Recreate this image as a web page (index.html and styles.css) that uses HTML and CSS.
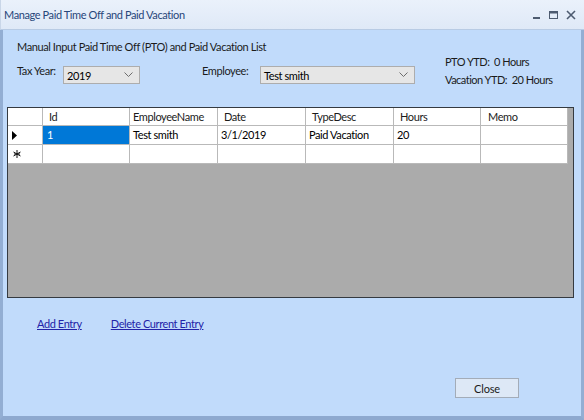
FILE: index.html
```html
<!DOCTYPE html>
<html>
<head>
<meta charset="utf-8">
<link rel="stylesheet" href="styles.css">
</head>
<body>
<div class="window">
  <div class="titlebar">
    <span class="title">Manage Paid Time Off and Paid Vacation</span>
    <div class="caption-btns">
      <svg width="10" height="10" viewBox="0 0 10 10"><rect x="1" y="7" width="7" height="2" fill="#4d5b70"/></svg>
      <svg width="10" height="10" viewBox="0 0 10 10"><rect x="0.5" y="1.5" width="8" height="7" fill="none" stroke="#4d5b70"/><rect x="0.5" y="1.5" width="8" height="2" fill="#4d5b70"/></svg>
      <svg width="10" height="10" viewBox="0 0 10 10"><path d="M1 1 L9 9 M9 1 L1 9" stroke="#4d5b70" stroke-width="1.6"/></svg>
    </div>
  </div>
  <div class="client">
    <div class="top">
      <div class="left">
        <div class="heading">Manual Input Paid Time Off (PTO) and Paid Vacation List</div>
        <div class="form">
          <span class="label label-tax">Tax Year:</span>
          <div class="combo combo-year"><span>2019</span><svg width="9" height="6" viewBox="0 0 9 6"><path d="M0.5 0.5 L4.5 4.5 L8.5 0.5" fill="none" stroke="#6d6d6d"/></svg></div>
          <span class="label label-emp">Employee:</span>
          <div class="combo combo-emp"><span>Test smith</span><svg width="9" height="6" viewBox="0 0 9 6"><path d="M0.5 0.5 L4.5 4.5 L8.5 0.5" fill="none" stroke="#6d6d6d"/></svg></div>
        </div>
      </div>
      <div class="stats">
        <div>PTO YTD:&nbsp; 0 Hours</div>
        <div>Vacation YTD:&nbsp; 20 Hours</div>
      </div>
    </div>
    <div class="grid">
      <div class="table">
        <div class="cell rh"></div>
        <div class="cell hd">Id</div>
        <div class="cell hd hd-name">EmployeeName</div>
        <div class="cell hd">Date</div>
        <div class="cell hd">TypeDesc</div>
        <div class="cell hd hd-hours">Hours</div>
        <div class="cell hd hd-memo">Memo</div>

        <div class="cell rh"><svg width="6" height="9" viewBox="0 0 6 9"><path d="M0 0 L5 4.5 L0 9 Z" fill="#000"/></svg></div>
        <div class="cell sel">1</div>
        <div class="cell">Test smith</div>
        <div class="cell">3/1/2019</div>
        <div class="cell">Paid Vacation</div>
        <div class="cell">20</div>
        <div class="cell"></div>

        <div class="cell rh"><svg class="star" width="8" height="8" viewBox="0 0 8 8"><path d="M4 0 V8 M0.5 2 L7.5 6 M7.5 2 L0.5 6 M1 4 H7" stroke="#111" stroke-width="1"/></svg></div>
        <div class="cell"></div>
        <div class="cell"></div>
        <div class="cell"></div>
        <div class="cell"></div>
        <div class="cell"></div>
        <div class="cell"></div>
      </div>
    </div>
    <div class="links">
      <a href="#" class="link link-add">Add Entry</a>
      <a href="#" class="link">Delete Current Entry</a>
    </div>
    <div class="footer">
      <button class="btn">Close</button>
    </div>
  </div>
</div>
</body>
</html>
```
FILE: styles.css
```css
* { box-sizing: border-box; }
html, body { margin: 0; padding: 0; }
body {
  width: 584px;
  height: 420px;
  overflow: hidden;
  font-family: Lato, "Open Sans", sans-serif;
  font-size: 11px;
  letter-spacing: -0.4px;
  color: #1b1b1b;
}
.window {
  width: 584px;
  height: 420px;
  display: flex;
  flex-direction: column;
  background: #c1dbfb;
}
.titlebar {
  height: 30px;
  flex: none;
  display: flex;
  align-items: center;
  justify-content: space-between;
  background: linear-gradient(#eaf1fb, #dfe9f7);
  border-bottom: 1px solid #b8cbe4;
  border-left: 1px solid #c9d6e8;
  padding-left: 3px;
  padding-right: 8px;
}
.title {
  color: #27467a;
  font-size: 11px;
}
.caption-btns {
  display: flex;
  gap: 7px;
  align-items: center;
}
.client {
  flex: 1;
  display: flex;
  flex-direction: column;
  border-left: 3px solid #93aed3;
  border-right: 3px solid #93aed3;
  border-bottom: 4px solid #8ea9cf;
}
.top {
  display: flex;
  height: 77px;
}
.left {
  padding-left: 14px;
  padding-top: 9px;
  width: 442px;
}
.heading {
  line-height: 16px;
  white-space: nowrap;
}
.form {
  display: flex;
  align-items: flex-start;
  margin-top: 10px;
}
.label {
  line-height: 14px;
  white-space: nowrap;
  margin-top: -1px;
}
.label-tax { width: 46px; }
.label-emp { width: 58px; }
.combo {
  height: 18px;
  background: #e6e6e6;
  border: 1px solid #adadad;
  display: flex;
  align-items: center;
  justify-content: space-between;
  padding: 0 6px 0 3px;
  margin-top: 1px;
  color: #000;
}
.combo-year { width: 77px; margin-right: 62px; }
.combo-emp { width: 155px; }
.stats {
  padding-top: 23px;
  line-height: 18px;
  white-space: nowrap;
  letter-spacing: -0.5px;
}
.grid {
  margin-left: 4px;
  width: 567px;
  height: 191px;
  background: #ababab;
  border: 1px solid #353a40;
}
.table {
  display: grid;
  grid-template-columns: 35px 87px 88px 88px 88px 87px 87px;
  grid-template-rows: 18px 19px 19px;
  width: 560px;
}
.cell {
  background: #fff;
  border-right: 1px solid #b9b9b9;
  border-bottom: 1px solid #b9b9b9;
  padding-left: 3px;
  line-height: 18px;
  white-space: nowrap;
  overflow: hidden;
  color: #000;
}
.hd {
  padding-left: 6px;
  line-height: 17px;
  color: #1b1b1b;
}
.hd-name { padding-left: 3px; }
.hd-hours { padding-left: 6px; }
.hd-memo { padding-left: 7px; }
.rh {
  display: flex;
  align-items: center;
  padding-left: 4px;
}
.star {
  margin-left: 1px;
}
.sel {
  background: #0078d7;
  color: #fff;
  padding-left: 4px;
}
.links {
  margin-top: 18px;
  padding-left: 34px;
  display: flex;
  line-height: 16px;
}
.link {
  color: #2323a8;
  text-decoration: underline;
}
.link-add { margin-right: 29px; }
.footer {
  flex: 1;
  display: flex;
  justify-content: flex-end;
  align-items: flex-end;
  padding-right: 62px;
  padding-bottom: 18px;
}
.btn {
  width: 64px;
  height: 20px;
  font-family: Lato, "Open Sans", sans-serif;
  font-size: 11px;
  letter-spacing: -0.2px;
  color: #1b1b1b;
  background: #dde8f6;
  border: 1px solid #a3acb8;
  padding: 0;
}
```
